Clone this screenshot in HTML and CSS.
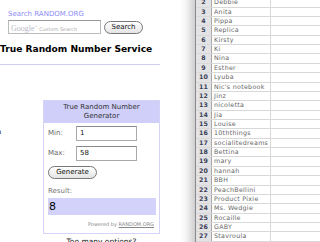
FILE: index.html
```html
<!DOCTYPE html>
<html>
<head>
  <title>RANDOM.ORG</title>
  <link rel="stylesheet" href="styles.css">
</head>
<body>
  <div class="page">
    <div class="search">
      <div class="search-label">Search RANDOM.ORG</div>
      <div class="search-row">
        <div class="search-input"><span class="g-logo">Google</span><sup class="tm">™</sup> Custom Search</div>
        <button class="pill-btn search-btn">Search</button>
      </div>
    </div>

    <h1 class="title">True Random Number Service</h1>
    <div class="rule"></div>

    <div class="main-row">
      <div class="cut-col"><span class="cut-text">a</span></div>
      <div class="gen-col">
        <div class="gen-box">
          <div class="gen-head">True Random Number<br>Generator</div>
          <div class="gen-body">
            <div class="field">
              <span class="field-label">Min:</span>
              <span class="field-input">1</span>
            </div>
            <div class="field">
              <span class="field-label">Max:</span>
              <span class="field-input">58</span>
            </div>
            <button class="pill-btn gen-btn">Generate</button>
            <div class="result-label">Result:</div>
            <div class="result-box">8</div>
            <div class="powered">Powered by <u>RANDOM.ORG</u></div>
          </div>
        </div>
        <div class="too-many">Too many options?</div>
      </div>
    </div>
  </div>

  <div class="sheet">
    <div class="shadow"></div>
    <div class="grid" id="grid"></div>
  </div>

  <script>
    // names as listed in the spreadsheet, row 2 onwards
    const names = ['Debbie', 'Anita', 'Pippa', 'Replica', 'Kirsty', 'Ki', 'Nina', 'Esther', 'Lyuba',
      "Nic's notebook", 'Jinz', 'nicoletta', 'Jia', 'Louise', '10ththings', 'socialitedreams',
      'Bettina', 'mary', 'hannah', 'BBH', 'PeachBellini', 'Product Pixie', 'Ms. Wedgie',
      'Rocaille', 'GABY', 'Stavroula'];

    const grid = document.getElementById('grid');
    names.forEach((name, i) => {
      const row = document.createElement('div');
      row.className = 'row';
      row.innerHTML = '<span class="num">' + (i + 2) + '</span>' +
        '<span class="name">' + name + '</span><span class="blank"></span>';
      grid.appendChild(row);
    });
  </script>
</body>
</html>
```

FILE: styles.css
```css
body {
  margin: 0;
  padding: 0;
  width: 320px;
  height: 242px;
  overflow: hidden;
  display: flex;
  background-color: #fff;
  font-family: "DejaVu Sans", Verdana, sans-serif;
  font-size: 7px;
}

.page {
  width: 180px;
  flex-shrink: 0;
  overflow: hidden;
}

.search {
  padding: 10px 0 0 8px;
}

.search-label {
  font-size: 7px;
  line-height: 8px;
  color: #8c8cf5;
}

.search-row {
  display: flex;
  align-items: center;
  margin-top: 2px;
}

.search-input {
  width: 89px;
  height: 12px;
  border: 1px solid #bbb;
  border-top-color: #999;
  font-size: 5px;
  line-height: 12px;
  color: #aaa;
  padding-left: 2px;
  white-space: nowrap;
  overflow: hidden;
}

.g-logo {
  font-family: "Liberation Serif", serif;
  font-size: 8px;
  color: #b9b9c6;
}

.tm {
  font-size: 3px;
}

.pill-btn {
  display: block;
  font-family: "DejaVu Sans", Verdana, sans-serif;
  font-size: 7px;
  color: #111;
  background: linear-gradient(#fff, #e4e4e4);
  border: 1px solid #777;
  border-radius: 7px;
  padding: 0 5px;
  height: 13px;
  line-height: 11px;
}

.search-btn {
  margin-left: 3px;
  width: 39px;
}

.title {
  margin: 9px 0 0 0;
  font-size: 9.1px;
  line-height: 12px;
  font-weight: bold;
  color: #000;
  white-space: nowrap;
}

.rule {
  width: 160px;
  height: 1px;
  background-color: #cfcff5;
  margin-top: 9px;
}

.main-row {
  display: flex;
  margin-top: 35px;
}

.cut-col {
  width: 43px;
  padding-top: 28px;
  line-height: 8px;
}

.cut-text {
  font-size: 7px;
  color: #333;
  margin-left: -3px;
}

.gen-col {
  width: 117px;
}

.gen-box {
  border: 1px solid #d4d4f8;
}

.gen-head {
  background-color: #cfcff9;
  font-size: 7px;
  line-height: 9px;
  color: #333;
  text-align: center;
  padding: 2px 0;
}

.gen-body {
  padding: 3px 3px 5px 4px;
  line-height: 9px;
}

.field {
  display: flex;
  align-items: center;
  margin-bottom: 5px;
}

.field-label {
  width: 28px;
  font-size: 7px;
  color: #666;
}

.field-input {
  width: 56px;
  height: 13px;
  border: 1px solid #aaa;
  border-top-color: #888;
  font-size: 7px;
  line-height: 13px;
  padding-left: 3px;
  color: #111;
}

.gen-btn {
  width: 49px;
  padding: 0;
}

.result-label {
  margin-top: 8px;
  font-size: 7px;
  line-height: 9px;
  color: #777;
}

.result-box {
  margin-top: 2px;
  width: 107px;
  height: 17px;
  background-color: #d2d2fb;
  font-size: 11px;
  line-height: 17px;
  padding-left: 1px;
  color: #000;
}

.powered {
  margin-top: 5px;
  text-align: right;
  font-size: 5px;
  line-height: 8px;
  color: #888;
  padding-right: 2px;
}

.too-many {
  text-align: center;
  font-size: 7.5px;
  line-height: 9px;
  color: #222;
  margin-top: 3px;
  white-space: nowrap;
}

.sheet {
  flex: 1;
  display: flex;
  min-width: 0;
}

.shadow {
  width: 15px;
  flex-shrink: 0;
  background: linear-gradient(to right, #fff, #f4f4f4 40%, #cfcfcf);
}

.grid {
  flex: 1;
  border-left: 1px solid #8a8a8a;
  margin-top: -1.7px;
  overflow: hidden;
}

.row {
  display: flex;
  height: 9.36px;
  box-sizing: border-box;
  border-bottom: 1px solid #d8d8d8;
  font-size: 6.3px;
  line-height: 8.4px;
}

.num {
  width: 15px;
  flex-shrink: 0;
  background-color: #e3e3e6;
  border-right: 1px solid #a8a8a8;
  text-align: center;
  font-weight: bold;
  color: #3a3f55;
}

.name {
  width: 56px;
  flex-shrink: 0;
  padding-left: 2px;
  border-right: 1px solid #d8d8d8;
  color: #666;
  letter-spacing: 0.3px;
  white-space: nowrap;
}

.blank {
  flex: 1;
}
```
